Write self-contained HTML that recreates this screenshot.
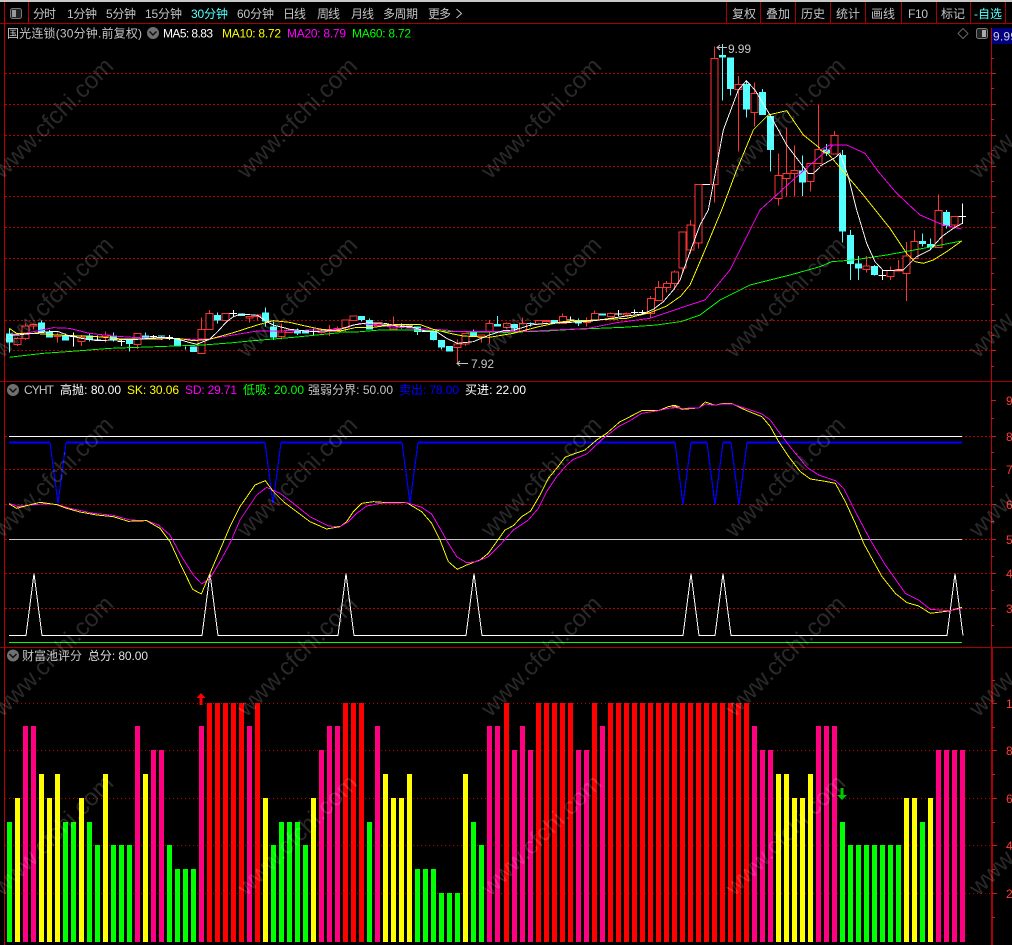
<!DOCTYPE html>
<html><head><meta charset="utf-8"><style>
html,body{margin:0;padding:0;background:#000;width:1012px;height:945px;overflow:hidden}
svg{display:block}
text{font-family:"Liberation Sans","Noto Sans CJK SC",sans-serif;font-size:12px}
.l{fill:none;stroke-width:2.8;shape-rendering:crispEdges}
.p{fill:none;stroke-width:1;shape-rendering:crispEdges}
.w{stroke:#ff3232;stroke-width:3.3;fill:none;shape-rendering:crispEdges}
.r{stroke:#ff3232;stroke-width:3.3;fill:#000;shape-rendering:crispEdges}
.cw{stroke:#54ffff;stroke-width:3.3;fill:none;shape-rendering:crispEdges}
.cb{stroke:#54ffff;stroke-width:21;fill:none;shape-rendering:crispEdges}
.dj{stroke:#fff;stroke-width:3.3;fill:none;shape-rendering:crispEdges}
.g{fill:#c4c4c4}
.ax{fill:#ff3c3c}
.wm{font-size:24px;fill:rgba(255,255,255,.16);text-anchor:middle}
</style></head><body>
<svg width="1012" height="945" viewBox="0 0 1012 945" xmlns="http://www.w3.org/2000/svg">
<rect width="1012" height="945" fill="#000"/>
<rect width="1012" height="2" fill="#c8c8c8"/>

<!-- dotted grids -->
<path stroke="#b80000" stroke-dasharray="2 2" fill="none" shape-rendering="crispEdges" d="M5 73.5H990M5 104.5H990M5 135.5H990M5 166.5H990M5 196.5H990M5 227.5H990M5 258.5H990M5 289.5H990M5 320.5H990M5 350.5H990M5 436.5H990M5 469.5H990M5 504.5H990M5 539.5H990M5 573.5H990M5 608.5H990"/>
<path stroke="#b80000" stroke-dasharray="1 3" fill="none" shape-rendering="crispEdges" d="M5 703.5H990M5 750.5H990M5 798.5H990M5 845.5H990M5 893.5H990"/>

<!-- separators & axes -->
<path stroke="#a80000" fill="none" shape-rendering="crispEdges" d="M0 23.5H1012M0 381.5H1012M0 647.5H1012M726.5 2V23M760.5 2V23M795.5 2V23M830.5 2V23M865.5 2V23M901.5 2V23M936.5 2V23M970.5 2V23M1005.5 2V23"/>
<path stroke="#c00000" fill="none" shape-rendering="crispEdges" d="M4.5 2V945M28.5 2V23M991.5 28V647"/>
<path stroke="#a80000" stroke-width="2" fill="none" shape-rendering="crispEdges" d="M992 648V945"/>
<path stroke="#c02020" fill="none" shape-rendering="crispEdges" d="M991 73.5h5M991 104.5h5M991 135.5h5M991 166.5h5M991 196.5h5M991 227.5h5M991 258.5h5M991 289.5h5M991 320.5h5M991 350.5h5M991 58.5h3M991 88.5h3M991 119.5h3M991 150.5h3M991 181.5h3M991 212.5h3M991 243.5h3M991 273.5h3M991 304.5h3M991 335.5h3M991 366.5h3M991 400.5h5M991 436.5h5M991 469.5h5M991 504.5h5M991 539.5h5M991 573.5h5M991 608.5h5M991 418.5h3M991 452.5h3M991 486.5h3M991 521.5h3M991 556.5h3M991 590.5h3M991 625.5h3M992 703.5h5M992 750.5h5M992 798.5h5M992 845.5h5M992 893.5h5M992 680.5h3M992 727.5h3M992 774.5h3M992 822.5h3M992 869.5h3M992 917.5h3"/>

<!-- toolbar -->
<rect x="10.5" y="8.5" width="11" height="10" rx="2" fill="#222" stroke="#777"/>
<rect x="12" y="10" width="4" height="7" fill="#999"/>
<g class="g">
<text x="33" y="18" textLength="23">分时</text>
<text x="67" y="18" textLength="30">1分钟</text>
<text x="106" y="18" textLength="30">5分钟</text>
<text x="145" y="18" textLength="37">15分钟</text>
<text x="191" y="18" textLength="37" style="fill:#54ffff">30分钟</text>
<text x="237" y="18" textLength="37">60分钟</text>
<text x="283" y="18" textLength="23">日线</text>
<text x="317" y="18" textLength="23">周线</text>
<text x="351" y="18" textLength="23">月线</text>
<text x="383" y="18" textLength="35">多周期</text>
<text x="428" y="18" textLength="23">更多</text>
<text x="732" y="18" textLength="24">复权</text>
<text x="766" y="18" textLength="24">叠加</text>
<text x="801" y="18" textLength="24">历史</text>
<text x="836" y="18" textLength="24">统计</text>
<text x="871" y="18" textLength="24">画线</text>
<text x="908" y="18" textLength="20">F10</text>
<text x="941" y="18" textLength="24">标记</text>
<text x="974" y="18" textLength="28" style="fill:#54ffff">-自选</text>
</g>
<path d="M456.5 9l5 4.500l-5 4.500" stroke="#c4c4c4" fill="none"/>

<!-- pane 1 header -->
<text class="g" x="7" y="37.5" textLength="135">国光连锁(30分钟.前复权)</text>
<circle cx="153" cy="33" r="6" fill="#707070"/><path d="M149.5 31.5l3.500 3.500l3.500-3.500" stroke="#111" stroke-width="1.5" fill="none"/>
<text x="163" y="37.5" textLength="50" fill="#fff">MA5: 8.83</text>
<text x="222" y="37.5" textLength="59" fill="#ffff00">MA10: 8.72</text>
<text x="287" y="37.5" textLength="59" fill="#ff00ff">MA20: 8.79</text>
<text x="352" y="37.5" textLength="59" fill="#00ff00">MA60: 8.72</text>
<path d="M963 28.5l5 5l-5 5l-5-5z" stroke="#666" fill="none"/>
<rect x="976.5" y="28.5" width="11" height="10" rx="2" fill="#222" stroke="#777"/>
<rect x="982" y="30" width="4" height="7" fill="#aaa"/>
<rect x="992" y="28" width="20" height="16" fill="#000080"/>
<text x="993" y="40.5" fill="#d0d0d0" textLength="24">9.99</text>

<!-- candles zoom3 region -->
<g transform="translate(0,290) scale(.33333)">
<path class="w" d="M52 141V168M76 100V150M100 100V118M172 128V158M244 135V168M316 125V158M412 130V177M604 82V190M628 60V118M676 70V92M748 79V97M772 72V92M844 100V148M868 120V127M964 115V130M988 105V138M1012 110V125"/>
<path class="r" d="M42 145h21v18h-21zM66 108h21v37h-21zM90 103h21v5h-21zM162 135h21v5h-21zM234 143h21v12h-21zM306 135h21v5h-21zM402 130h21v33h-21zM594 118h21v72h-21zM618 70h21v48h-21zM666 70h21v22h-21zM738 79h21v5h-21zM762 75h21v4h-21zM834 126h21v14h-21zM858 120h21v7h-21zM954 118h21v9h-21zM978 120h21v5h-21zM1002 115h21v10h-21z"/>
<path class="cw" d="M28 115V188M124 92V128M148 120V143M196 130V152M268 130V155M340 128V155M388 145V185M436 128V145M484 136V150M556 170V178M652 68V100M796 52V110M820 95V150M892 115V135M916 122V130"/>
<path class="cb" d="M28 130V158M124 98V128M148 125V143M196 135V152M268 136V150M340 137V150M388 150V162M436 136V145M484 136V140M532 147V167M580 170V186M652 75V92M724 70V78M796 67V95M820 110V143M892 120V130M916 122V130"/>
<path class="dj" d="M220 128V170M209 140h22M282 150h21M292 137V152M364 145V168M353 155h22M460 135V145M449 140h22M508 135V150M497 142h22M700 60V78M689 70h22M940 115V135M929 124h22"/>
<polyline class="l" stroke="#00ff00" points="28,202 60,198 130,190 230,183 330,175 470,170 610,165 700,158 760,152 880,142 1020,128"/>
<polyline class="l" stroke="#ff00ff" points="28,135 90,127 160,113 208,115 268,130 340,138 412,143 500,145 580,148 628,147 700,135 772,123 868,122 940,120 1020,118"/>
<polyline class="l" stroke="#ffff00" points="28,115 50,130 100,130 172,135 244,138 292,140 364,147 470,147 532,145 580,152 628,148 700,128 772,105 820,92 868,97 916,108 964,118 1020,123"/>
<polyline class="l" stroke="#ffffff" points="28,135 52,135 100,130 150,125 175,125 200,135 244,145 292,152 340,150 412,148 484,142 532,147 570,158 590,163 628,148 650,128 680,95 700,80 724,72 772,76 796,92 820,105 870,118 940,125 1020,120"/>
</g>

<!-- candles zoom4 region -->
<g transform="translate(340,270) scale(.33333)">
<path class="w" d="M16 150V185M40 138V152M112 160V170M160 140V177M352 208V283M376 190V228M424 195V218M448 150V220M500 158V175M548 142V183M596 150V165M620 150V157M668 130V160M740 142V170M764 122V150M812 128V142M860 128V137M932 78V145M956 33V92M980 33V68M1004 2V60"/>
<path class="r" d="M6 150h21v22h-21zM30 138h21v14h-21zM102 162h21v5h-21zM150 167h21v10h-21zM342 222h21v11h-21zM366 190h21v32h-21zM414 195h21v7h-21zM438 160h21v26h-21zM490 160h21v13h-21zM538 160h21v23h-21zM586 152h21v10h-21zM610 152h21v3h-21zM658 140h21v20h-21zM730 155h21v2h-21zM754 130h21v20h-21zM802 130h21v10h-21zM850 130h21v5h-21zM922 85h21v45h-21zM946 52h21v40h-21zM970 40h21v12h-21zM994 6h21v34h-21z"/>
<path class="cw" d="M64 138V155M88 145V178M232 170V195M280 185V212M304 210V238M400 178V198M472 138V170M524 162V185M572 158V170M561 160h22M716 145V168"/>
<path class="cb" d="M64 138V150M88 150V178M232 170V186M280 185V210M304 210V232M328 228V245M400 188V198M472 162V170M524 162V175M644 150V160M716 150V160M788 130V137"/>
<path class="dj" d="M125 165h22M184 160V175M173 168h22M197 168h22M245 185h22M692 140V155M681 150h22M836 120V138M825 132h22M884 118V132M873 128h22M908 120V135M897 128h22"/>
<polyline class="l" stroke="#00ff00" points="0,186 50,186 120,180 230,180 350,185 500,187 620,183 700,178 850,172 950,165 1020,155"/>
<polyline class="l" stroke="#ff00ff" points="0,178 60,160 150,170 220,175 320,180 345,185 540,185 745,175 830,158 930,145 1020,115"/>
<polyline class="l" stroke="#ffff00" points="0,183 50,172 100,172 172,163 238,163 280,178 330,190 370,198 448,202 520,190 596,170 668,155 764,150 860,145 930,128 980,108 1020,80"/>
<polyline class="l" stroke="#ffffff" points="0,178 40,165 88,158 136,160 170,168 220,172 260,185 290,185 320,205 352,220 400,215 448,195 490,182 524,180 572,165 620,160 668,158 716,156 764,152 812,145 860,138 908,132 940,118 970,95 1000,60 1020,30"/>
</g>

<!-- candles zoom5 region -->
<g transform="translate(640,40) scale(.33333)">
<path class="w" d="M127 576V700M151 540V640M175 433V625M223 20V488M295 108V335M343 127V260M415 340V497M439 262V470M463 316V468M511 370V455M535 194V371M583 273V342"/>
<path class="r" d="M117 576h21v108h-21zM141 555h21v75h-21zM165 433h21v176h-21zM213 55h21v378h-21zM285 133h21v15h-21zM333 160h21v57h-21zM405 406h21v69h-21zM429 400h21v15h-21zM453 391h21v10h-21zM501 370h21v55h-21zM525 328h21v43h-21zM573 286h21v56h-21z"/>
<path class="cw" d="M247 12V182M271 53V167M319 125V232M367 147V225M391 228V395M487 346V468M559 312V348"/>
<path class="cb" d="M247 45V53M271 53V147M319 132V208M367 156V225M391 228V330M487 391V428M559 328V340"/>
<path class="dj" d="M188 433h22"/>
<polyline class="l" stroke="#ff00ff" points="120,804 195,780 270,690 360,510 470,410 580,315"/>
<polyline class="l" stroke="#ffff00" points="120,771 150,735 195,630 247,505 290,390 340,270 385,225 440,212 490,285 540,325"/>
<polyline class="l" stroke="#ffffff" points="120,720 150,636 180,555 205,510 222,420 250,270 295,150 319,122 345,150 390,225 440,315 505,400 520,400 540,382"/>
</g>

<!-- candles zoom6 region -->
<g transform="translate(820,130) scale(.33333)">
<path class="w" d="M139 378V428M211 410V450M235 390V423M259 336V513M283 300V385M355 193V352M403 259V295"/>
<path class="r" d="M129 408h21v10h-21zM201 422h21v18h-21zM225 418h21v5h-21zM249 378h21v52h-21zM273 334h21v51h-21zM345 241h21v111h-21zM393 259h21v26h-21z"/>
<path class="cw" d="M67 60V338M91 300V450M115 378V450M163 405V437M307 310V350M331 325V357M379 240V296"/>
<path class="cb" d="M67 75V305M91 315V402M115 400V416M163 408V435M307 333V342M331 342V352M379 246V288"/>
<path class="dj" d="M187 420V450M176 436h22M427 220V282M416 259h22"/>
<polyline class="l" stroke="#00ff00" points="-420,576 -360,555 -300,510 -210,465 -90,435 0,410 35,395 100,390 200,375 310,355 425,333"/>
<polyline class="l" stroke="#ff00ff" points="0,60 30,45 80,45 135,70 175,125 230,190 300,255 370,285 425,297"/>
<polyline class="l" stroke="#ffff00" points="0,60 25,72 75,130 130,195 210,295 260,370 285,395 310,400 340,390 380,365 425,333"/>
<polyline class="l" stroke="#ffffff" points="0,108 45,83 60,70 85,140 110,240 140,340 165,395 190,422 250,420 290,380 330,360 365,320 400,295 427,280"/>
</g>

<!-- high/low markers -->
<path d="M727 47.5h-10M720 45l-3 2.500l3 2.500" stroke="#c4c4c4" fill="none"/>
<text class="g" x="728" y="53" textLength="23">9.99</text>
<path d="M468 363.5h-11M460 361l-3 2.500l3 2.500" stroke="#c4c4c4" fill="none"/>
<text class="g" x="471" y="368" textLength="23">7.92</text>

<!-- pane 2 header -->
<circle cx="13" cy="390" r="6" fill="#707070"/><path d="M9.5 388.5l3.500 3.500l3.500-3.500" stroke="#111" stroke-width="1.5" fill="none"/>
<text class="g" x="24" y="394" textLength="30">CYHT</text>
<text x="60" y="394" textLength="61" fill="#fff">高抛: 80.00</text>
<text x="127" y="394" textLength="52" fill="#ffff00">SK: 30.06</text>
<text x="185" y="394" textLength="52" fill="#ff00ff">SD: 29.71</text>
<text x="243" y="394" textLength="61" fill="#00ff00">低吸: 20.00</text>
<text class="g" x="308" y="394" textLength="85">强弱分界: 50.00</text>
<text x="399" y="394" textLength="60" fill="#0000ff">卖出: 78.00</text>
<text x="465" y="394" textLength="61" fill="#fff">买进: 22.00</text>

<!-- pane 2 lines -->
<path class="p" stroke="#fff" d="M9 436.5H962"/>
<path class="p" stroke="#c8c8c8" d="M9 539.5H962"/>
<path class="p" stroke="#00ff00" d="M9 642.5H962"/>
<path fill="none" stroke="#0000ff" stroke-width="2" shape-rendering="crispEdges" d="M9 442.5H50M66 442.5H265M281 442.5H402M418 442.5H675M691 442.5H707M723 442.5H731M747 442.5H962"/>
<polyline fill="none" stroke="#0000ff" stroke-width="1.2" shape-rendering="crispEdges" points="50,442.5 58,503.5 66,442.5"/>
<polyline fill="none" stroke="#0000ff" stroke-width="1.2" shape-rendering="crispEdges" points="265,442.5 273,503.5 281,442.5"/>
<polyline fill="none" stroke="#0000ff" stroke-width="1.2" shape-rendering="crispEdges" points="402,442.5 410,503.5 418,442.5"/>
<polyline fill="none" stroke="#0000ff" stroke-width="1.2" shape-rendering="crispEdges" points="675,442.5 683,504.5 691,442.5"/>
<polyline fill="none" stroke="#0000ff" stroke-width="1.2" shape-rendering="crispEdges" points="707,442.5 715,504.5 723,442.5"/>
<polyline fill="none" stroke="#0000ff" stroke-width="1.2" shape-rendering="crispEdges" points="731,442.5 739,504.5 747,442.5"/>
<polyline class="p" stroke="#fff" points="9,635.5 26,635.5 34,573.5 42,635.5 202,635.5 210,573.5 218,635.5 338,635.5 346,573.5 354,635.5 466,635.5 474,573.5 482,635.5 683,635.5 691,573.5 699,635.5 715,635.5 723,573.5 731,635.5 947,635.5 955,573.5 963,635.5"/>
<g transform="translate(0,380) scale(.33333)">
<polyline class="l" stroke="#ff00ff" points="27,370 55,380 90,375 130,372 170,373 210,385 280,400 340,406 390,420 440,422 475,435 510,465 545,530 580,585 605,612 630,595 660,545 690,490 720,420 770,345 800,322 840,340 880,370 930,410 985,438 1020,440"/>
<polyline class="l" stroke="#ffff00" points="27,372 50,385 80,377 120,367 170,374 200,385 240,396 290,405 340,410 385,424 440,422 480,445 510,485 540,550 578,628 604,642 630,580 660,510 690,440 720,380 765,315 796,302 820,335 850,365 890,395 930,425 980,447 1020,440"/>
</g>
<g transform="translate(340,380) scale(.33333)">
<polyline class="l" stroke="#ffff00" points="0,440 20,425 40,395 65,370 100,365 130,367 200,368 245,395 275,430 300,480 325,545 352,568 380,555 420,540 445,520 470,485 495,450 520,437 545,410 572,393 600,345 625,295 650,265 675,232 700,222 735,210 770,180 800,160 840,125 870,110 905,92 955,92 985,80 1005,76 1020,82"/>
<polyline class="l" stroke="#ff00ff" points="0,440 25,425 50,400 80,378 120,370 200,368 245,382 275,402 300,445 325,490 350,530 380,548 410,545 445,530 480,495 520,450 565,420 595,385 620,335 650,290 680,255 700,238 740,222 790,175 835,140 870,122 905,100 955,92 985,85 1020,82"/>
</g>
<g transform="translate(672,380) scale(.33333)">
<polyline class="l" stroke="#ffff00" points="0,76 30,88 80,84 100,66 130,76 150,71 180,71 220,90 270,110 295,140 320,185 350,230 385,275 415,297 460,304 490,310 520,365 550,430 575,490 605,545 630,590 670,640 705,668 740,678 775,700 830,693 870,682"/>
<polyline class="l" stroke="#ff00ff" points="0,82 30,85 80,84 100,72 130,76 150,72 180,72 220,85 270,102 295,120 320,155 350,195 405,262 440,285 490,302 515,325 550,395 595,480 640,555 700,640 740,660 775,688 830,692 870,686"/>
</g>

<!-- axis labels -->
<g class="ax">
<text x="1006" y="405">9</text><text x="1006" y="441">8</text><text x="1006" y="474">7</text><text x="1006" y="509">6</text><text x="1006" y="544">5</text><text x="1006" y="578">4</text><text x="1006" y="613">3</text>
<text x="1006" y="708">1</text><text x="1006" y="755">8</text><text x="1006" y="803">6</text><text x="1006" y="850">4</text><text x="1006" y="898">2</text>
</g>

<!-- pane 3 header -->
<circle cx="13" cy="655.5" r="6" fill="#707070"/><path d="M9.5 654l3.500 3.500l3.500-3.500" stroke="#111" stroke-width="1.5" fill="none"/>
<text class="g" x="22" y="660" textLength="60">财富池评分</text>
<text x="88" y="660" textLength="60" fill="#e0e0e0">总分: 80.00</text>

<!-- bars -->
<g fill="none" stroke-width="5" shape-rendering="crispEdges">
<path stroke="#00ff00" d="M9.5 822V942M65.5 822V942M73.5 822V942M89.5 822V942M97.5 845V942M113.5 845V942M121.5 845V942M129.5 845V942M169.5 845V942M177.5 869V942M185.5 869V942M193.5 869V942M273.5 845V942M281.5 822V942M289.5 822V942M297.5 822V942M305.5 845V942M369.5 822V942M417.5 869V942M425.5 869V942M433.5 869V942M441.5 893V942M449.5 893V942M457.5 893V942M473.5 822V942M481.5 845V942M842.5 822V942M850.5 845V942M858.5 845V942M866.5 845V942M874.5 845V942M882.5 845V942M890.5 845V942M898.5 845V942M922.5 822V942"/>
<path stroke="#ffff00" d="M17.5 798V942M41.5 774V942M49.5 798V942M57.5 774V942M81.5 798V942M105.5 774V942M145.5 774V942M265.5 798V942M313.5 798V942M385.5 774V942M393.5 798V942M401.5 798V942M409.5 774V942M465.5 774V942M778.5 774V942M786.5 774V942M794.5 798V942M802.5 798V942M810.5 774V942M906.5 798V942M914.5 798V942M930.5 798V942"/>
<path stroke="#ff0080" d="M25.5 726V942M33.5 726V942M137.5 726V942M153.5 750V942M161.5 750V942M201.5 726V942M249.5 726V942M321.5 750V942M329.5 726V942M337.5 726V942M377.5 726V942M489.5 726V942M497.5 726V942M514.5 750V942M522.5 726V942M530.5 750V942M578.5 750V942M586.5 750V942M602.5 726V942M754.5 726V942M762.5 750V942M770.5 750V942M818.5 726V942M826.5 726V942M834.5 726V942M938.5 750V942M946.5 750V942M954.5 750V942M962.5 750V942"/>
<path stroke="#ff0000" d="M209.5 703V942M217.5 703V942M225.5 703V942M233.5 703V942M241.5 703V942M257.5 703V942M345.5 703V942M353.5 703V942M361.5 703V942M506.5 703V942M538.5 703V942M546.5 703V942M554.5 703V942M562.5 703V942M570.5 703V942M594.5 703V942M610.5 703V942M618.5 703V942M626.5 703V942M634.5 703V942M642.5 703V942M650.5 703V942M658.5 703V942M666.5 703V942M674.5 703V942M682.5 703V942M690.5 703V942M698.5 703V942M706.5 703V942M714.5 703V942M722.5 703V942M730.5 703V942M738.5 703V942M746.5 703V942"/>
</g>
<!-- arrows -->
<path d="M201 693l4.500 5h-3v7h-3v-7h-3z" fill="#ff0000"/>
<path d="M842 800l-5-5h3.500v-7h3v7h3.500z" fill="#00c800"/>

<!-- watermark -->
<g>
<text class="wm" transform="translate(53,118) rotate(-45) translate(0,8)">www.cfchi.com</text>
<text class="wm" transform="translate(297,118) rotate(-45) translate(0,8)">www.cfchi.com</text>
<text class="wm" transform="translate(541,118) rotate(-45) translate(0,8)">www.cfchi.com</text>
<text class="wm" transform="translate(785,118) rotate(-45) translate(0,8)">www.cfchi.com</text>
<text class="wm" transform="translate(1029,118) rotate(-45) translate(0,8)">www.cfchi.com</text>
<text class="wm" transform="translate(53,297) rotate(-45) translate(0,8)">www.cfchi.com</text>
<text class="wm" transform="translate(297,297) rotate(-45) translate(0,8)">www.cfchi.com</text>
<text class="wm" transform="translate(541,297) rotate(-45) translate(0,8)">www.cfchi.com</text>
<text class="wm" transform="translate(785,297) rotate(-45) translate(0,8)">www.cfchi.com</text>
<text class="wm" transform="translate(1029,297) rotate(-45) translate(0,8)">www.cfchi.com</text>
<text class="wm" transform="translate(53,477) rotate(-45) translate(0,8)">www.cfchi.com</text>
<text class="wm" transform="translate(297,477) rotate(-45) translate(0,8)">www.cfchi.com</text>
<text class="wm" transform="translate(541,477) rotate(-45) translate(0,8)">www.cfchi.com</text>
<text class="wm" transform="translate(785,477) rotate(-45) translate(0,8)">www.cfchi.com</text>
<text class="wm" transform="translate(1029,477) rotate(-45) translate(0,8)">www.cfchi.com</text>
<text class="wm" transform="translate(53,656) rotate(-45) translate(0,8)">www.cfchi.com</text>
<text class="wm" transform="translate(297,656) rotate(-45) translate(0,8)">www.cfchi.com</text>
<text class="wm" transform="translate(541,656) rotate(-45) translate(0,8)">www.cfchi.com</text>
<text class="wm" transform="translate(785,656) rotate(-45) translate(0,8)">www.cfchi.com</text>
<text class="wm" transform="translate(1029,656) rotate(-45) translate(0,8)">www.cfchi.com</text>
<text class="wm" transform="translate(53,835) rotate(-45) translate(0,8)">www.cfchi.com</text>
<text class="wm" transform="translate(297,835) rotate(-45) translate(0,8)">www.cfchi.com</text>
<text class="wm" transform="translate(541,835) rotate(-45) translate(0,8)">www.cfchi.com</text>
<text class="wm" transform="translate(785,835) rotate(-45) translate(0,8)">www.cfchi.com</text>
<text class="wm" transform="translate(1029,835) rotate(-45) translate(0,8)">www.cfchi.com</text>
</g>
</svg>
</body></html>
